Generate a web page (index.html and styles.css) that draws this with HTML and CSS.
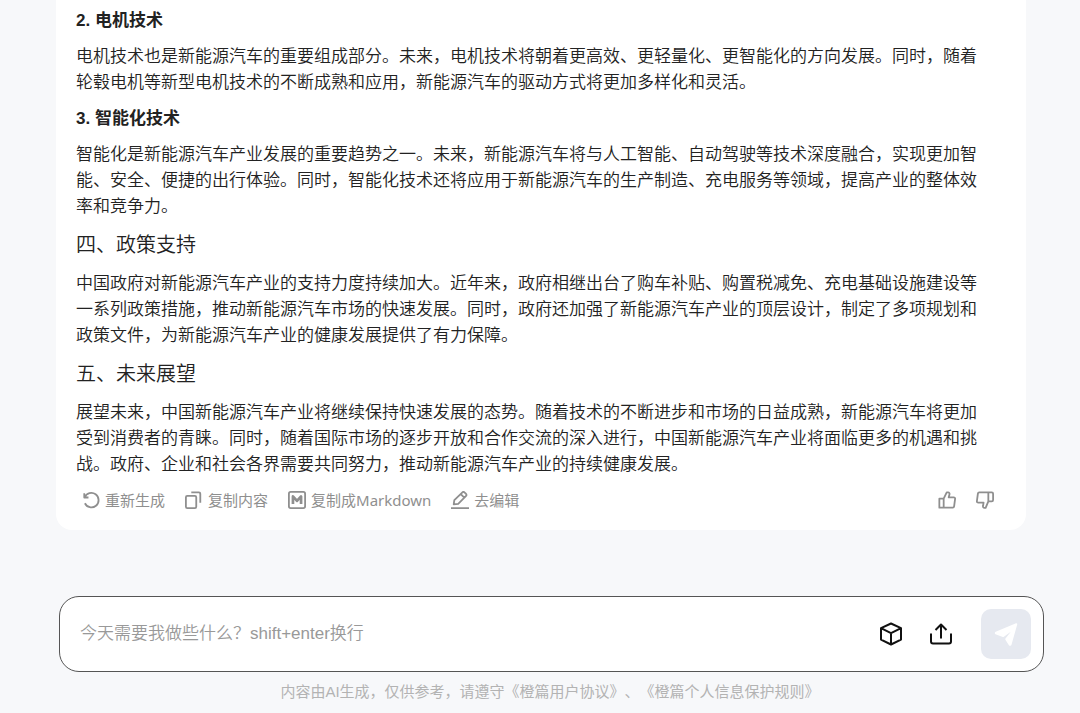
FILE: index.html
```html
<!DOCTYPE html>
<html lang="zh-CN">
<head>
    <meta charset="UTF-8">
    <meta name="viewport" content="width=device-width, initial-scale=1.0">
    <title>橙篇</title>
    <link rel="stylesheet" href="styles.css">
</head>
<body>
    <main class="page">
        <article class="answer">
            <h3>2. 电机技术</h3>
            <p>电机技术也是新能源汽车的重要组成部分。未来，电机技术将朝着更高效、更轻量化、更智能化的方向发展。同时，随着轮毂电机等新型电机技术的不断成熟和应用，新能源汽车的驱动方式将更加多样化和灵活。</p>
            <h3>3. 智能化技术</h3>
            <p>智能化是新能源汽车产业发展的重要趋势之一。未来，新能源汽车将与人工智能、自动驾驶等技术深度融合，实现更加智能、安全、便捷的出行体验。同时，智能化技术还将应用于新能源汽车的生产制造、充电服务等领域，提高产业的整体效率和竞争力。</p>
            <h2>四、政策支持</h2>
            <p>中国政府对新能源汽车产业的支持力度持续加大。近年来，政府相继出台了购车补贴、购置税减免、充电基础设施建设等一系列政策措施，推动新能源汽车市场的快速发展。同时，政府还加强了新能源汽车产业的顶层设计，制定了多项规划和政策文件，为新能源汽车产业的健康发展提供了有力保障。</p>
            <h2>五、未来展望</h2>
            <p>展望未来，中国新能源汽车产业将继续保持快速发展的态势。随着技术的不断进步和市场的日益成熟，新能源汽车将更加受到消费者的青睐。同时，随着国际市场的逐步开放和合作交流的深入进行，中国新能源汽车产业将面临更多的机遇和挑战。政府、企业和社会各界需要共同努力，推动新能源汽车产业的持续健康发展。</p>

            <div class="toolbar">
                <button class="tool" type="button">
                    <svg class="icon" viewBox="0 0 20 20"><path d="M2.5 2.500v4.700h4.700M3 7.200A8 8 0 1 1 3.200 13.600"/></svg>
                    重新生成
                </button>
                <button class="tool" type="button">
                    <svg class="icon" viewBox="0 0 20 20"><rect x="1" y="5.500" width="11.500" height="13.500" rx="1.500"/><path d="M7 1.500h8.500A1.500 1.500 0 0 1 17 3v10"/></svg>
                    复制内容
                </button>
                <button class="tool" type="button">
                    <svg class="icon" viewBox="0 0 20 20"><rect x="1" y="1" width="18" height="18" rx="2"/><path class="thick" d="M5.500 14.500V6l4.500 5 4.500-5v8.500"/></svg>
                    复制成Markdown
                </button>
                <button class="tool" type="button">
                    <svg class="icon" viewBox="0 0 20 20"><path d="M0 19h20M3 14.800l.7-4.600 8.700-8.500a2 2 0 0 1 2.800 0l1.300 1.300a2 2 0 0 1 0 2.800L8 14.200zM10.800 3.400l4 4"/></svg>
                    去编辑
                </button>
                <div class="votes">
                    <button class="tool" type="button" aria-label="赞">
                        <svg class="icon" viewBox="0 0 20 20"><path d="M1.500 8.500h4.800v10H1.500zM6.300 8.500l3.400-7h1.600a1.600 1.600 0 0 1 1.500 2L11.900 7h5.600a1.500 1.500 0 0 1 1.500 1.700l-1.100 8.500a1.500 1.500 0 0 1-1.500 1.300H6.300"/></svg>
                    </button>
                    <button class="tool" type="button" aria-label="踩">
                        <svg class="icon" viewBox="0 0 20 20"><path d="M13.700 1.500h3.800A1.500 1.500 0 0 1 19 3v7a1.500 1.500 0 0 1-1.500 1.500h-3.800zM13.700 11.500l-3 7.200H9.300a1.600 1.600 0 0 1-1.500-2l.6-3.700H2.500A1.500 1.500 0 0 1 1 11.300l1.100-8.500a1.500 1.500 0 0 1 1.500-1.300h10.100"/></svg>
                    </button>
                </div>
            </div>
        </article>

        <form class="composer">
            <input class="prompt" type="text" aria-label="输入内容" placeholder="今天需要我做些什么？shift+enter换行">
            <button class="action" type="button" aria-label="工具">
                <svg viewBox="0 0 24 24"><path d="M12 1.500l10 4.700v11.400L12 22.500 2 17.600V6.200zM2 6.200l10 5 10-5M12 11.200v11.300"/></svg>
            </button>
            <button class="action" type="button" aria-label="上传">
                <svg viewBox="0 0 24 24"><path d="M12 16.500V2.800M6.500 8L12 2.500 17.500 8M2 11.500v8a2 2 0 0 0 2 2h16a2 2 0 0 0 2-2v-8"/></svg>
            </button>
            <button class="send" type="button" aria-label="发送">
                <svg viewBox="0 0 24 24"><path d="M22 1.200a1 1 0 0 1 1.200 1.300l-5.700 20.200a1.500 1.500 0 0 1-2.600.5l-3.500-5.400a1 1 0 0 1 .1-1.200l5.300-6.900-6.900 5.100a1 1 0 0 1-1.100.1L1.500 12.200a1.300 1.300 0 0 1 .2-2.400z"/></svg>
            </button>
        </form>

        <footer class="notice">内容由AI生成，仅供参考，请遵守<a href="#">《橙篇用户协议》</a>、<a href="#">《橙篇个人信息保护规则》</a></footer>
    </main>
</body>
</html>
```

FILE: styles.css
```css
* { box-sizing: border-box; }

body {
    margin: 0;
    background: #f7f8fa;
    color: #222;
    font-family: "Liberation Sans", "Noto Sans CJK SC", sans-serif;
    font-size: 17px;
    line-height: 26px;
    text-spacing-trim: space-all;
}

button, input { font: inherit; border: none; background: none; padding: 0; }
button { cursor: pointer; }
svg { display: block; fill: none; stroke: currentColor; stroke-width: 2; stroke-linejoin: round; }

.page { padding: 0 36px 0 56px; }

/* answer card */
.answer {
    margin-right: 18px;
    padding: 8px 32px 18px 20px;
    background: #fff;
    border-radius: 0 0 16px 16px;
}
.answer h3 { margin: 0 0 10px; font-size: 17px; font-weight: bold; }
.answer h2 { margin: 0 0 11px; font-size: 20px; font-weight: 350; line-height: 30px; }
.answer p { margin: 0 0 10px; padding-right: 2px; font-weight: 350; }

.toolbar {
    display: flex;
    align-items: center;
    gap: 20px;
    padding-left: 6px;
    font-family: "Noto Sans", "Noto Sans CJK SC", sans-serif;
    font-size: 15px;
    line-height: 24px;
}
.tool { display: flex; align-items: center; gap: 5px; color: #8f8f8f; }
.icon { width: 18px; height: 18px; }
.thick { stroke-width: 3; }
.votes { display: flex; gap: 20px; margin-left: auto; }

/* message box */
.composer {
    display: flex;
    align-items: center;
    height: 76px;
    margin: 66px 0 0 3px;
    padding: 0 12px 0 20px;
    background: #fff;
    border: 1px solid #555;
    border-radius: 20px;
}
.prompt { flex: 1; min-width: 0; height: 50px; outline: none; color: #222; font-weight: 350; }
.prompt::placeholder { color: #999; opacity: 1; }
.action { margin-right: 26px; color: #111; }
.action svg { width: 24px; height: 24px; }
.send {
    display: flex;
    align-items: center;
    justify-content: center;
    width: 50px;
    height: 50px;
    margin-left: 2px;
    border-radius: 10px;
    background: #e6e9f0;
    color: #fff;
}
.send svg { width: 24px; height: 24px; fill: currentColor; stroke: none; }

.notice { margin-top: 8px; color: #b3b3b3; font-size: 15px; line-height: 24px; text-align: center; }
.notice a { color: inherit; text-decoration: none; }
```
